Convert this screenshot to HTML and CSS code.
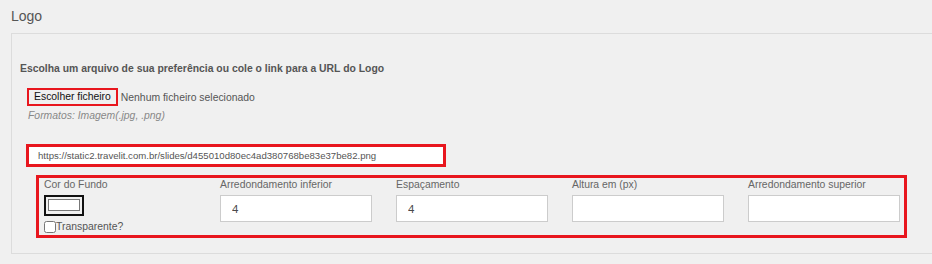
FILE: index.html
```html
<!DOCTYPE html>
<html>
  <head>
    <meta charset="utf-8" />
    <link rel="stylesheet" href="styles.css">
  </head>
  <body>
    <div class="section-title">Logo</div>

    <div class="panel">
      <div class="intro">Escolha um arquivo de sua preferência ou cole o link para a URL do Logo</div>

      <div class="file-row">
        <button class="file-btn">Escolher ficheiro</button>
        <span class="file-name">Nenhum ficheiro selecionado</span>
      </div>
      <div class="formats">Formatos: Imagem(.jpg, .png)</div>

      <input class="url-input" type="text" value="https://static2.travelit.com.br/slides/d455010d80ec4ad380768be83e37be82.png">

      <div class="options">
        <div class="field">
          <label class="field-label">Cor do Fundo</label>
          <div class="color-box"><div class="color-swatch"></div></div>
          <label class="check"><input type="checkbox">Transparente?</label>
        </div>
        <div class="field">
          <label class="field-label">Arredondamento inferior</label>
          <input class="field-input" type="text" value="4">
        </div>
        <div class="field">
          <label class="field-label">Espaçamento</label>
          <input class="field-input" type="text" value="4">
        </div>
        <div class="field">
          <label class="field-label">Altura em (px)</label>
          <input class="field-input" type="text" value="">
        </div>
        <div class="field">
          <label class="field-label">Arredondamento superior</label>
          <input class="field-input" type="text" value="">
        </div>
      </div>
    </div>
  </body>
</html>
```

FILE: styles.css
```css
body {
  margin: 0;
  padding: 0;
  background: #f0f0f0;
  font-family: "Liberation Sans", Arial, sans-serif;
  color: #555;
  overflow: hidden;
}

.section-title {
  font-size: 14px;
  line-height: 18px;
  color: #555;
  padding: 7px 0 0 11px;
  height: 26px;
}

.panel {
  margin: 0 -20px 0 11px;
  border-top: 1px solid #dcdcdc;
  border-left: 1px solid #dcdcdc;
  border-bottom: 1px solid #dcdcdc;
  padding: 28px 0 15px 8px;
}

.intro {
  font-size: 10.4px;
  font-weight: 700;
  line-height: 14px;
  color: #555;
}

.file-row {
  display: flex;
  align-items: center;
  margin: 12px 0 0 7px;
  height: 18px;
}

.file-btn {
  font-family: inherit;
  font-size: 10.4px;
  line-height: 12px;
  color: #111;
  background: #f0f0f0;
  border: 2px solid #e8161e;
  padding: 1px 5px;
  height: 18px;
  margin: 0;
}

.file-name {
  font-size: 10.4px;
  color: #555;
  margin-left: 3px;
}

.formats {
  font-size: 10.4px;
  font-style: italic;
  color: #888;
  line-height: 14px;
  margin: 3px 0 0 8px;
}

.url-input {
  display: block;
  box-sizing: border-box;
  width: 420px;
  height: 23px;
  margin: 21px 0 0 6px;
  padding: 0 0 0 9px;
  border: 3px solid #e8161e;
  background: #fff;
  font-family: inherit;
  font-size: 9.6px;
  color: #555;
  outline: none;
}

.options {
  box-sizing: border-box;
  width: 871px;
  height: 63px;
  margin: 8px 0 0 16px;
  border: 3px solid #e8161e;
  padding: 0 0 0 5px;
  display: grid;
  grid-template-columns: repeat(5, 152px);
  column-gap: 24px;
}

.field {
  display: flex;
  flex-direction: column;
  align-items: flex-start;
}

.field-label {
  font-size: 10.4px;
  line-height: 13px;
  color: #666;
  height: 17px;
}

.field-input {
  box-sizing: border-box;
  width: 152px;
  height: 27px;
  border: 1px solid #ccc;
  background: #fff;
  padding: 0 0 0 11px;
  font-family: inherit;
  font-size: 11.5px;
  color: #4a4a4a;
  outline: none;
}

.color-box {
  box-sizing: border-box;
  width: 40px;
  height: 21px;
  border: 2px solid #111;
  padding: 2px 2px 3px 2px;
}

.color-swatch {
  box-sizing: border-box;
  height: 100%;
  border: 1px solid #777;
  background: #fff;
}

.check {
  display: flex;
  align-items: center;
  font-size: 10.4px;
  color: #555;
  margin-top: 5px;
  line-height: 12px;
}

.check input {
  margin: 0;
  width: 12px;
  height: 12px;
}
```
